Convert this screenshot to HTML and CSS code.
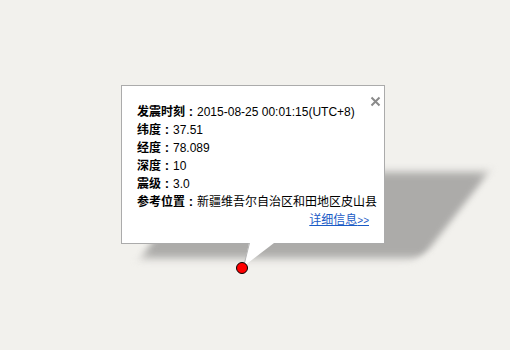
FILE: index.html
```html
<!DOCTYPE html>
<html lang="zh-CN">
<head>
    <meta charset="UTF-8">
    <title>地震信息</title>
    <link rel="stylesheet" href="styles.css">
</head>
<body>
    <div class="map">
        <div class="shadow"></div>
        <svg class="tail" width="40" height="30" viewBox="0 0 40 30">
            <polygon points="9,0 34,0 4,23" fill="#fff"/>
            <line x1="9.5" y1="0" x2="4" y2="22" stroke="#b4b4b4" stroke-width="1"/>
        </svg>
        <div class="marker"></div>
        <div class="info">
            <svg class="close" width="11" height="11" viewBox="0 0 11 11">
                <path d="M1.5 1.5 L9.5 9.5 M9.5 1.5 L1.5 9.5" stroke="#8a8a8a" stroke-width="2"/>
            </svg>
            <div class="row"><b>发震时刻<span class="colon">:</span></b>2015-08-25 00:01:15(UTC+8)</div>
            <div class="row"><b>纬度<span class="colon">:</span></b>37.51</div>
            <div class="row"><b>经度<span class="colon">:</span></b>78.089</div>
            <div class="row"><b>深度<span class="colon">:</span></b>10</div>
            <div class="row"><b>震级<span class="colon">:</span></b>3.0</div>
            <div class="row"><b>参考位置<span class="colon">:</span></b>新疆维吾尔自治区和田地区皮山县</div>
            <div class="more"><a href="#">详细信息<span class="arrows">&gt;&gt;</span></a></div>
        </div>
    </div>
</body>
</html>
```

FILE: styles.css
```css
body {
    margin: 0;
    background: #f2f1ed;
    font-family: "Liberation Sans", "Noto Sans CJK SC", sans-serif;
}

.map {
    position: relative;
    width: 510px;
    height: 350px;
    overflow: hidden;
}

.shadow {
    position: absolute;
    left: 140px;
    top: 172px;
    width: 282px;
    height: 86px;
    background: #acaba9;
    border-radius: 8px;
    transform-origin: left bottom;
    transform: skewX(-38deg);
    filter: blur(4px);
}

.info {
    position: absolute;
    left: 121px;
    top: 85px;
    width: 246px;
    height: 128px;
    padding: 17px 1px 12px 15px;
    background: #fff;
    border: 1px solid #ababab;
    font-size: 12px;
    line-height: 18px;
    color: #000;
    white-space: nowrap;
}

.row b {
    font-weight: bold;
}

.colon {
    display: inline-block;
    width: 12px;
    text-align: center;
    font-size: 13px;
}

.close {
    position: absolute;
    right: 3px;
    top: 10px;
    display: block;
}

.more {
    text-align: right;
    padding-right: 14px;
}

.more a {
    color: #1a5bc6;
    text-decoration: underline;
}

.arrows {
    font-size: 10px;
}

.tail {
    position: absolute;
    left: 240px;
    top: 243px;
    z-index: 2;
}

.marker {
    position: absolute;
    left: 236px;
    top: 262px;
    width: 10px;
    height: 10px;
    background: #f00;
    border: 1px solid #000;
    border-radius: 50%;
    z-index: 3;
}
```
